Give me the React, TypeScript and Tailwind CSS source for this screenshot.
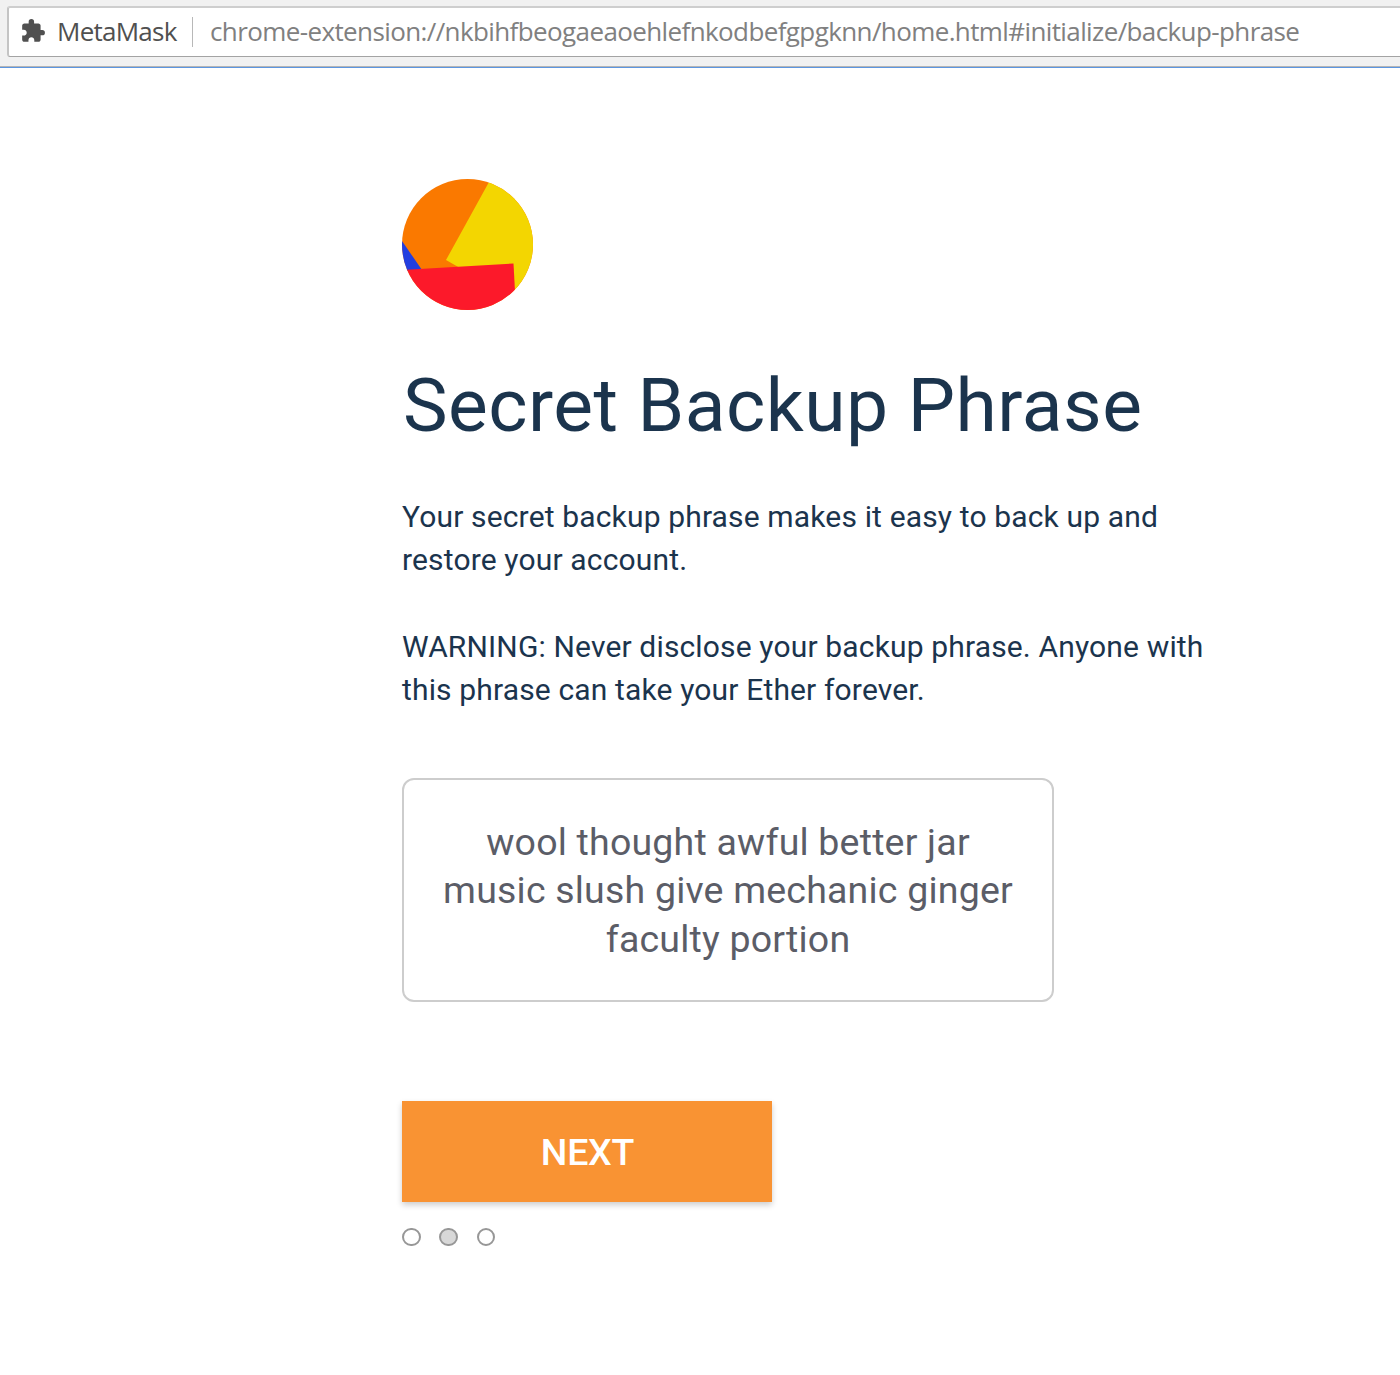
export default function App() {
  return (
    <div className="flex h-[1375px] w-[1400px] flex-col overflow-hidden bg-white font-['Roboto',sans-serif] text-[#1b344d]">
      <header className="h-[68px] shrink-0 border-b border-[#5c96e0] bg-[#f1f1f1]">
        <div className="h-[67px] border-b border-[#b5b5b5] pl-[7px] pt-[6px]">
          <div className="flex h-[51px] w-[1400px] items-center rounded-[3px] border-b border-l-2 border-t-2 border-b-[#a3a3a3] border-l-[#c4c4c4] border-t-[#cecece] bg-white pl-[12px] font-['Open_Sans',sans-serif] text-[26px] leading-[36px]">
            <svg viewBox="0 0 24 24" className="size-[26px] shrink-0 -translate-x-px -translate-y-px fill-[#505050]">
              <path d="M20.5 11H19V7c0-1.100-.9-2-2-2h-4V3.500a2.500 2.500 0 0 0-5 0V5H4c-1.100 0-1.990.9-1.990 2v3.800H3.500c1.490 0 2.700 1.210 2.700 2.700s-1.210 2.700-2.700 2.700H2V20c0 1.100.9 2 2 2h3.800v-1.500c0-1.490 1.210-2.700 2.700-2.700s2.700 1.210 2.700 2.700V22H17c1.100 0 2-.9 2-2v-4h1.500a2.500 2.500 0 0 0 0-5z" />
            </svg>
            <span className="ml-[10px] w-[120px] -translate-y-px whitespace-nowrap tracking-[-0.750px] text-[#505050]">MetaMask</span>
            <span className="ml-[15px] h-[30px] w-px bg-[#b8b8b8]" />
            <span className="ml-[17px] -translate-y-px whitespace-nowrap tracking-[-0.608px] text-[#808080]">chrome-extension://nkbihfbeogaeaoehlefnkodbefgpgknn/home.html#initialize/backup-phrase</span>
          </div>
        </div>
      </header>
      <main className="flex flex-col items-start pl-[402px] pt-[111px]">
        <svg viewBox="0 0 131 131" className="size-[131px] overflow-hidden rounded-full">
          <rect width="131" height="131" fill="#fa7900" />
          <path d="M0 62L20 91L0 92Z" fill="#233ee0" />
          <path d="M87 3L44 81L58 89L112 111L131 111V0H88Z" fill="#f3d601" />
          <path d="M0 91L111.500 84.500L114 131H0Z" fill="#fc192a" />
        </svg>
        <h1 className="mt-[47px] whitespace-nowrap pl-px text-[75px] leading-[96px] tracking-[0.480px]">Secret Backup Phrase</h1>
        <p className="mt-[42px] whitespace-nowrap text-[30px] leading-[43px] tracking-[0.150px]">Your secret backup phrase makes it easy to back up and<br />restore your account.</p>
        <p className="mt-[44px] whitespace-nowrap text-[30px] leading-[43px] tracking-[0.150px]">WARNING: Never disclose your backup phrase. Anyone with<br />this phrase can take your Ether forever.</p>
        <div className="mt-[67px] h-[224px] w-[652px] rounded-[12px] border-2 border-[#cdcdcd] pt-[38px] text-center text-[37.500px] leading-[48.400px] tracking-[0.200px] text-[#5b5d67]">
          wool thought awful better jar<br />music slush give mechanic ginger<br />faculty portion
        </div>
        <button className="mt-[99px] h-[100.500px] w-[370px] bg-[#f99333] pl-px pt-[2px] text-[37.500px] font-medium tracking-[-0.200px] text-white shadow-[0_3px_6px_rgba(0,0,0,0.2)]">NEXT</button>
        <div className="mt-[26px] flex gap-[18.670px]">
          <span className="size-[18.670px] rounded-full border-2 border-[#979797]" />
          <span className="size-[18.670px] rounded-full border-2 border-[#979797] bg-[#d8d8d8]" />
          <span className="size-[18.670px] rounded-full border-2 border-[#979797]" />
        </div>
      </main>
    </div>
  );
}
